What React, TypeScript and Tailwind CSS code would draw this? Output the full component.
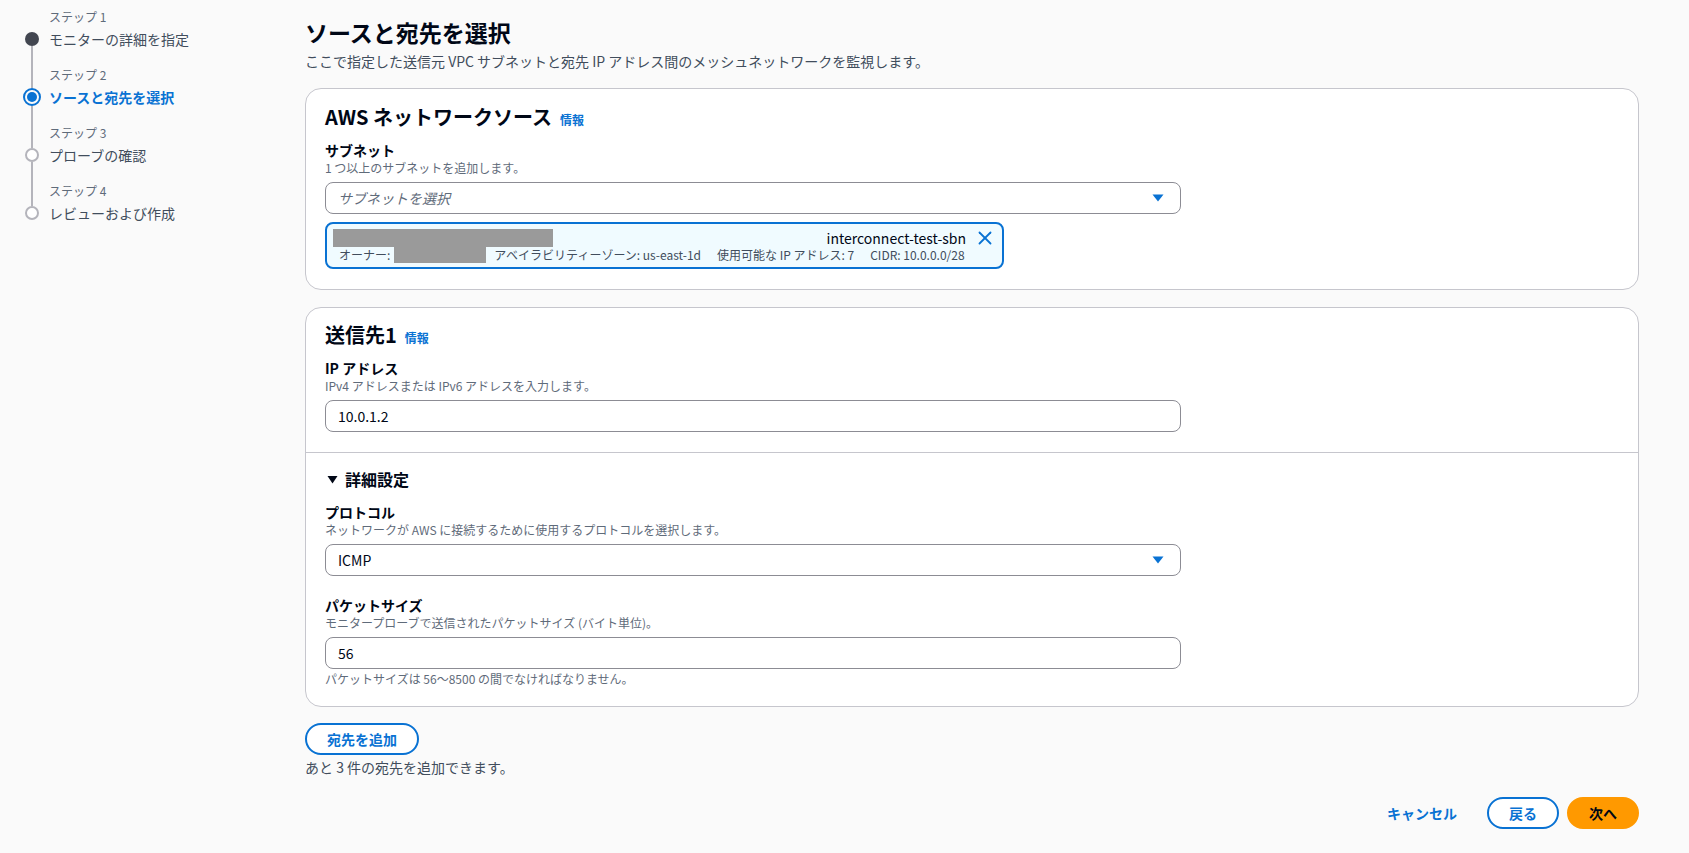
import { X } from 'lucide-react';

type StepState = 'done' | 'active' | 'todo';

const steps: { label: string; title: string; state: StepState }[] = [
    { label: 'ステップ 1', title: 'モニターの詳細を指定', state: 'done' },
    { label: 'ステップ 2', title: 'ソースと宛先を選択', state: 'active' },
    { label: 'ステップ 3', title: 'プローブの確認', state: 'todo' },
    { label: 'ステップ 4', title: 'レビューおよび作成', state: 'todo' },
];

function Marker({ state }: { state: StepState }) {
    if (state === 'active') {
        return (
            <div className="w-[18px] h-[18px] rounded-full border-2 border-[#0972d3] flex items-center justify-center shrink-0">
                <div className="w-[10px] h-[10px] rounded-full bg-[#0972d3]" />
            </div>
        );
    }
    if (state === 'done') return <div className="w-[14px] h-[14px] rounded-full bg-[#424650] shrink-0" />;
    return <div className="w-[14px] h-[14px] rounded-full border-2 border-[#b4b4bb] bg-white shrink-0" />;
}

function Caret() {
    return (
        <svg width="12" height="8" viewBox="0 0 12 8">
            <path d="M0.5 0.5h11L6 7.5z" fill="#0972d3" />
        </svg>
    );
}

function Info() {
    return <span className="ml-[8px] text-[12px] leading-[16px] font-bold text-[#0972d3]">情報</span>;
}

function Field({ label, desc, children }: { label: string; desc: string; children: React.ReactNode }) {
    return (
        <div className="flex flex-col">
            <div className="text-[14px] leading-[20px] font-bold text-[#000716]">{label}</div>
            <div className="text-[12px] leading-[16px] text-[#5f6b7a]">{desc}</div>
            <div className="mt-[6px]">{children}</div>
        </div>
    );
}

function Select({ value, placeholder }: { value?: string; placeholder?: string }) {
    return (
        <div className="w-[856px] h-[32px] rounded-[8px] border border-[#8c8c94] bg-white flex items-center justify-between pl-[12px] pr-[16px]">
            {value ? (
                <span className="text-[14px] text-[#000716]">{value}</span>
            ) : (
                <span className="text-[14px] italic text-[#5f6b7a]">{placeholder}</span>
            )}
            <Caret />
        </div>
    );
}

function Input({ value }: { value: string }) {
    return (
        <div className="w-[856px] h-[32px] rounded-[8px] border border-[#8c8c94] bg-white flex items-center pl-[12px]">
            <span className="text-[14px] text-[#000716]">{value}</span>
        </div>
    );
}

export default function App() {
    return (
        <div className="min-h-screen bg-[#fafafa] flex font-['Noto_Sans_CJK_JP','Open_Sans',sans-serif] text-[#000716]">
            <div className="w-[305px] shrink-0 pl-[24px] pt-[9px]">
                {steps.map((step, index) => (
                    <div key={index} className="flex">
                        <div className="w-[16px] flex flex-col items-center">
                            <div
                                className={`w-[2px] ${step.state === 'active' ? 'h-[21px]' : 'h-[23px]'} ${index === 0 ? '' : 'bg-[#b4b4bb]'}`}
                            />
                            <Marker state={step.state} />
                            <div className={`w-[2px] flex-1 ${index === steps.length - 1 ? '' : 'bg-[#b4b4bb]'}`} />
                        </div>
                        <div className="pl-[9px] pb-[18px]">
                            <div className="text-[12px] leading-[16px] text-[#5f6b7a]">{step.label}</div>
                            <div
                                className={`mt-[4px] text-[14px] leading-[20px] ${
                                    step.state === 'active' ? 'font-bold text-[#0972d3]' : 'text-[#414d5c]'
                                }`}>
                                {step.title}
                            </div>
                        </div>
                    </div>
                ))}
            </div>

            <div className="flex-1 pr-[50px] pt-[17px] pb-[24px]">
                <h1 className="text-[23px] leading-[30px] font-bold">ソースと宛先を選択</h1>
                <p className="mt-[4px] text-[14px] leading-[20px] text-[#414d5c]">
                    ここで指定した送信元 VPC サブネットと宛先 IP アドレス間のメッシュネットワークを監視します。
                </p>

                <div className="mt-[17px] rounded-[16px] border border-[#c6c6cd] bg-white px-[19px] pt-[16px] pb-[20px]">
                    <div className="flex items-baseline">
                        <h2 className="text-[20px] leading-[24px] font-bold">AWS ネットワークソース</h2>
                        <Info />
                    </div>
                    <div className="mt-[11px]">
                        <Field label="サブネット" desc="1 つ以上のサブネットを追加します。">
                            <Select placeholder="サブネットを選択" />
                        </Field>
                    </div>
                    <div className="mt-[8px] w-[679px] rounded-[8px] border-2 border-[#0972d3] bg-[#f0fbff] pl-[6px] pr-[6px] pt-[5px] pb-[4px] flex items-start">
                        <div className="flex-1 flex flex-col">
                            <div className="flex items-center justify-between h-[18px]">
                                <div className="w-[220px] h-[18px] bg-[#9a9a9a]" />
                                <span className="text-[14px] text-[#000716]">interconnect-test-sbn</span>
                            </div>
                            <div className="flex items-center h-[16px] pl-[6px] text-[12px] text-[#414d5c]">
                                <span>オーナー:</span>
                                <div className="ml-[4px] w-[92px] h-[16px] bg-[#9a9a9a]" />
                                <span className="ml-[8px]">アベイラビリティーゾーン: us-east-1d</span>
                                <span className="ml-[16px]">使用可能な IP アドレス: 7</span>
                                <span className="ml-[16px]">CIDR: 10.0.0.0/28</span>
                            </div>
                        </div>
                        <X className="ml-[8px] -mt-[2px] text-[#0972d3]" size={22} strokeWidth={2} />
                    </div>
                </div>

                <div className="mt-[17px] rounded-[16px] border border-[#c6c6cd] bg-white">
                    <div className="px-[19px] pt-[15px] pb-[20px]">
                        <div className="flex items-baseline">
                            <h2 className="text-[20px] leading-[24px] font-bold">送信先1</h2>
                            <Info />
                        </div>
                        <div className="mt-[11px]">
                            <Field label="IP アドレス" desc="IPv4 アドレスまたは IPv6 アドレスを入力します。">
                                <Input value="10.0.1.2" />
                            </Field>
                        </div>
                    </div>
                    <div className="border-t border-[#c6c6cd] px-[19px] pt-[15px] pb-[19px]">
                        <div className="flex items-center text-[16px] leading-[22px] font-bold">
                            <svg width="11" height="9" viewBox="0 0 11 9" className="ml-[2px] mr-[7px]">
                                <path d="M0.5 1h10L5.5 8.5z" fill="#000716" />
                            </svg>
                            詳細設定
                        </div>
                        <div className="mt-[12px]">
                            <Field label="プロトコル" desc="ネットワークが AWS に接続するために使用するプロトコルを選択します。">
                                <Select value="ICMP" />
                            </Field>
                        </div>
                        <div className="mt-[19px]">
                            <Field label="パケットサイズ" desc="モニタープローブで送信されたパケットサイズ (バイト単位)。">
                                <Input value="56" />
                            </Field>
                        </div>
                        <div className="mt-[2px] text-[12px] leading-[16px] text-[#5f6b7a]">
                            パケットサイズは 56〜8500 の間でなければなりません。
                        </div>
                    </div>
                </div>

                <button className="mt-[16px] h-[32px] rounded-full border-2 border-[#0972d3] bg-white px-[20px] text-[14px] font-bold text-[#0972d3]">
                    宛先を追加
                </button>
                <p className="mt-[2px] text-[14px] leading-[20px] text-[#414d5c]">あと 3 件の宛先を追加できます。</p>

                <div className="mt-[20px] flex justify-end items-center gap-[8px]">
                    <button className="h-[32px] px-[22px] text-[14px] font-bold text-[#0972d3]">キャンセル</button>
                    <button className="h-[32px] rounded-full border-2 border-[#0972d3] bg-white px-[20px] text-[14px] font-bold text-[#0972d3]">
                        戻る
                    </button>
                    <button className="h-[32px] rounded-full border-2 border-[#ff9900] bg-[#ff9900] px-[20px] text-[14px] font-bold text-[#000716]">
                        次へ
                    </button>
                </div>
            </div>
        </div>
    );
}
